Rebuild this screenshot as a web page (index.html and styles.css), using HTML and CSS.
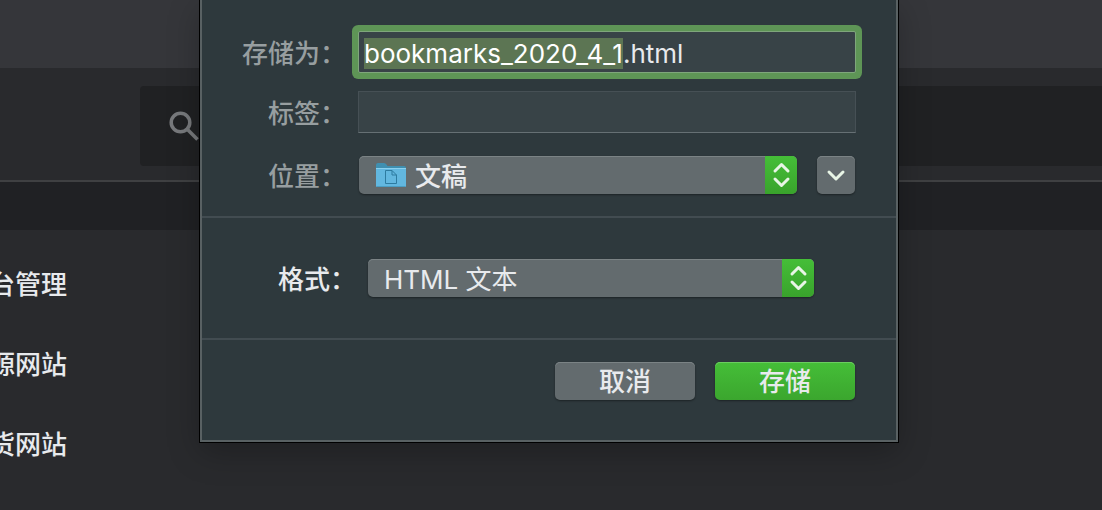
FILE: index.html
```
<!DOCTYPE html>
<html lang="zh-CN">
<head>
    <meta charset="UTF-8">
    <meta name="viewport" content="width=device-width, initial-scale=1.0">
    <title>书签</title>
    <link rel="stylesheet" href="styles.css">
</head>
<body>
    <div class="browser">
        <div class="tab-strip"></div>
        <div class="toolbar">
            <div class="search-box">
                <svg class="search-icon" viewBox="0 0 30 30" aria-hidden="true">
                    <circle cx="11.5" cy="11.5" r="9.3"/>
                    <path d="M18 18l10.500 10.500"/>
                </svg>
            </div>
        </div>
        <div class="bookmark-bar"></div>
        <ul class="folder-list">
            <li><span>后台管理</span></li>
            <li><span>资源网站</span></li>
            <li><span>干货网站</span></li>
        </ul>
    </div>

    <form class="save-sheet">
        <div class="sheet-section file-section">
            <div class="row">
                <label for="fileName">存储为：</label>
                <input class="text-field" type="text" id="fileName" value="bookmarks_2020_4_1.html" autocomplete="off" spellcheck="false">
            </div>
            <div class="row tags-row">
                <label for="tags">标签：</label>
                <input class="text-field" type="text" id="tags" autocomplete="off">
            </div>
            <div class="row location-row">
                <label for="location">位置：</label>
                <div class="location">
                    <div class="popup">
                        <select class="with-icon" id="location">
                            <option>文稿</option>
                        </select>
                        <svg class="folder-icon" viewBox="0 0 32 26" aria-hidden="true">
                            <path class="folder-back" d="M1 3Q1 1 3 1H9Q10.500 1 11.500 2.500L12.500 4H29Q31 4 31 6V12H1z"/>
                            <rect class="folder-front" x="1" y="6" width="30" height="19" rx="1"/>
                            <path class="folder-edge" d="M1 6.500H31"/>
                            <path class="folder-base" d="M1.500 24.500H30.500"/>
                            <path class="folder-page" d="M10.500 8.500H17L21.500 13V21.500H10.500zM17 8.500V13H21.500"/>
                        </svg>
                        <span class="stepper">
                            <svg viewBox="0 0 32 38" aria-hidden="true"><path d="M10 15l6.500-6.500L23 15M10 23l6.500 6.500L23 23"/></svg>
                        </span>
                    </div>
                    <button class="expand" type="button" aria-label="展开">
                        <svg viewBox="0 0 38 38" aria-hidden="true"><path d="M12 16l7 7 7-7"/></svg>
                    </button>
                </div>
            </div>
        </div>

        <div class="sheet-section format-section">
            <div class="row">
                <label for="format">格式：</label>
                <div class="popup">
                    <select id="format">
                        <option>HTML 文本</option>
                    </select>
                    <span class="stepper">
                        <svg viewBox="0 0 32 38" aria-hidden="true"><path d="M10 15l6.500-6.500L23 15M10 23l6.500 6.500L23 23"/></svg>
                    </span>
                </div>
            </div>
        </div>

        <div class="sheet-section actions">
            <button class="btn" type="button">取消</button>
            <button class="btn btn-primary" type="button">存储</button>
        </div>
    </form>

    <script>
        // Preselect the name without its extension
        const fileName = document.getElementById('fileName');
        fileName.focus();
        fileName.setSelectionRange(0, fileName.value.lastIndexOf('.'));
    </script>
</body>
</html>
```
FILE: styles.css
```
* {
    margin: 0;
    padding: 0;
    box-sizing: border-box;
}

body {
    background: #292a2d;
    font-family: Inter, 'Noto Sans CJK SC', sans-serif;
    font-size: 26px;
    line-height: 34px;
    color: #e8eaed;
    overflow: hidden;
}

input,
select,
button {
    font: inherit;
    color: inherit;
    border: none;
    outline: none;
    appearance: none;
}

svg {
    display: block;
    fill: none;
}

/* page behind the sheet */
.browser {
    min-height: 100vh;
}

.tab-strip {
    height: 68px;
    background: #35363a;
}

.toolbar {
    padding: 18px 0 14px 140px;
    border-bottom: 2px solid #3f4042;
}

.search-box {
    display: flex;
    align-items: center;
    height: 80px;
    padding-left: 29px;
    border-radius: 4px 0 0 4px;
    background: #202123;
}

.search-icon {
    width: 30px;
    height: 30px;
    stroke: #77797c;
    stroke-width: 3.500;
}

.bookmark-bar {
    height: 48px;
    background: #202124;
}

.folder-list {
    list-style: none;
    padding-top: 15px;
    font-weight: 500;
}

.folder-list li {
    display: flex;
    justify-content: flex-end;
    align-items: center;
    width: 67px;
    height: 80px;
    white-space: nowrap;
}

/* save sheet */
.save-sheet {
    position: absolute;
    top: 0;
    left: 200px;
    right: 204px;
    background: #2e393d;
    border: 2px solid #596163;
    border-top: none;
    box-shadow: 0 0 0 1px #000, 0 10px 30px rgba(0, 0, 0, 0.25);
}

.sheet-section + .sheet-section {
    border-top: 2px solid #424c51;
}

.row {
    display: grid;
    grid-template-columns: 144px 1fr;
    column-gap: 12px;
    align-items: center;
}

.row label {
    padding-top: 4px;
    text-align: right;
    white-space: nowrap;
    font-weight: 500;
}

.file-section {
    padding: 31px 40px 22px 0;
}

.file-section label {
    color: #979ea0;
}

.tags-row {
    margin-top: 18px;
}

.location-row {
    margin-top: 23px;
}

.text-field {
    width: 100%;
    height: 42px;
    padding: 3px 5px 0;
    background: #384347;
    border: 1px solid #465055;
    border-bottom-color: #667074;
}

.text-field:focus {
    border-color: #7fa67c;
    border-radius: 2px;
    box-shadow: 0 0 0 6px #5e9556;
}

.text-field::selection {
    background: #5c7553;
    color: #fff;
}

.location {
    display: flex;
    gap: 20px;
    padding: 0 1px;
}

.popup {
    display: grid;
    grid-template-columns: 1fr 32px;
    flex: 1;
    border-radius: 5px;
    overflow: hidden;
    background: #636b6e;
    box-shadow: 0 1px 2px rgba(0, 0, 0, 0.4), inset 0 1px #7b8385;
}

.popup select {
    grid-area: 1 / 1 / 2 / 3;
    height: 38px;
    padding: 4px 48px 0 16px;
    background: transparent;
}

.popup select.with-icon {
    padding-left: 56px;
    font-weight: 500;
}

.folder-icon {
    grid-area: 1 / 1;
    align-self: center;
    width: 32px;
    height: 26px;
    margin-left: 16px;
    pointer-events: none;
}

.folder-back {
    fill: #3f8fb0;
}

.folder-front {
    fill: #62b7df;
}

.folder-edge {
    stroke: #8bd0ee;
}

.folder-base {
    stroke: #4b9dc2;
}

.folder-page {
    stroke: #2d7ba0;
}

.stepper {
    grid-area: 1 / 2;
    background: linear-gradient(#45be38, #39a32c);
    pointer-events: none;
}

.stepper path,
.expand path {
    stroke: #e8f5e6;
    stroke-width: 3;
    stroke-linecap: round;
    stroke-linejoin: round;
}

.expand {
    width: 38px;
    height: 38px;
    border-radius: 5px;
    background: #636b6e;
    box-shadow: 0 1px 2px rgba(0, 0, 0, 0.4), inset 0 1px #7b8385;
}

.format-section {
    padding: 41px 82px 41px 10px;
}

.actions {
    display: flex;
    justify-content: flex-end;
    gap: 20px;
    padding: 22px 41px 40px;
}

.btn {
    width: 140px;
    height: 38px;
    padding-top: 2px;
    border-radius: 5px;
    background: #636b6e;
    box-shadow: 0 1px 2px rgba(0, 0, 0, 0.4), inset 0 1px #7b8385;
    font-weight: 500;
}

.btn-primary {
    background: linear-gradient(#45be38, #3ba62e);
    box-shadow: 0 1px 2px rgba(0, 0, 0, 0.4), inset 0 1px #6bcd60;
}
```
